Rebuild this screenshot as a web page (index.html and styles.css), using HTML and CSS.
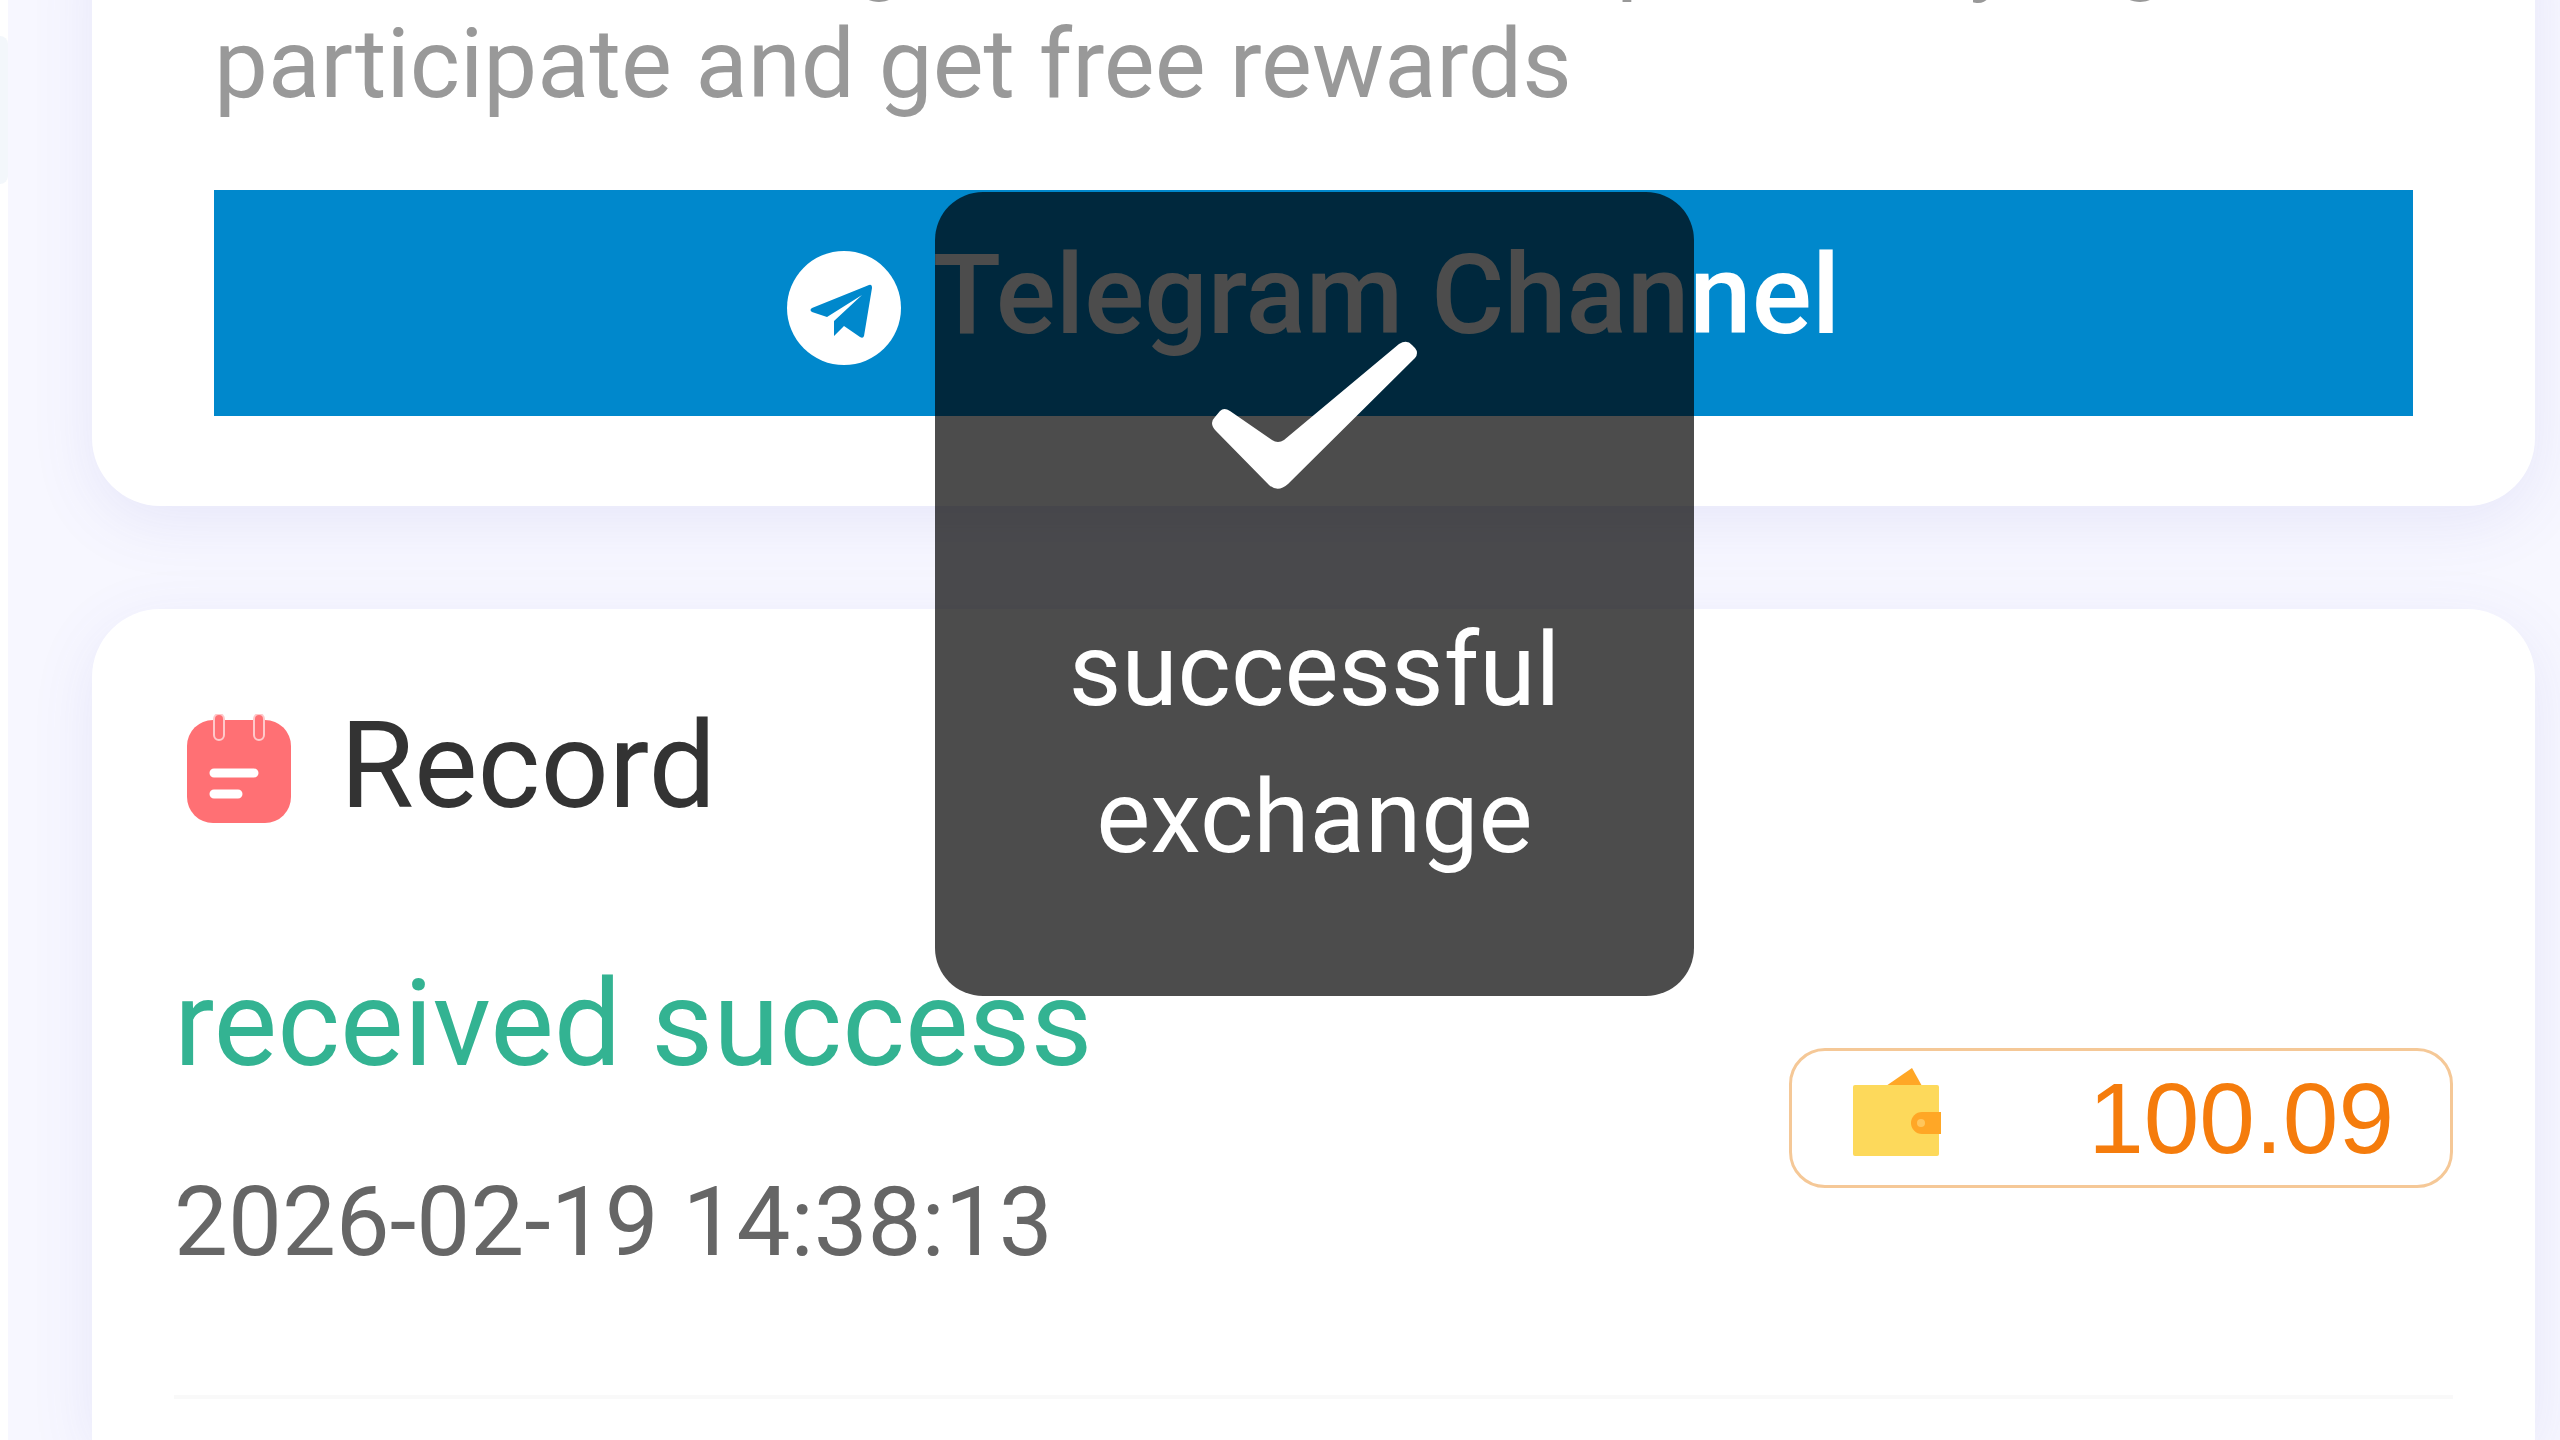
FILE: index.html
```html
<!DOCTYPE html>
<html lang="en">
<head>
    <meta charset="UTF-8">
    <meta name="viewport" content="width=device-width, initial-scale=1.0">
    <title>Record</title>
    <link rel="stylesheet" href="styles.css">
</head>
<body>
    <div class="side-tab"></div>
    <main class="page">
        <section class="card promo">
            <p class="promo-text">Follow the Telegram channels to pick daily a gift participate and get free rewards</p>
            <a class="telegram-btn" href="#">
                <svg class="telegram-icon" viewBox="0 0 114 114" aria-hidden="true">
                    <circle cx="57" cy="57" r="57" fill="#fff"/>
                    <path d="M25 57 82 34Q85 33 85 37L77 85Q76 88 73 86L57 75 47 85V70L75 44 40 66 25 61Q22 59 25 57Z" fill="#0088cc"/>
                </svg>
                <span>Telegram Channel</span>
            </a>
        </section>

        <section class="card record">
            <header class="record-head">
                <svg class="record-icon" viewBox="0 0 106 110" aria-hidden="true">
                    <rect x="1" y="6" width="104" height="103" rx="26" fill="#ff7074"/>
                    <rect x="28" y="0" width="10" height="26" rx="5" fill="#ff7074" stroke="#ffc9ca" stroke-width="2"/>
                    <rect x="68" y="0" width="10" height="26" rx="5" fill="#ff7074" stroke="#ffc9ca" stroke-width="2"/>
                    <path d="M28 59H68M28 80H52" fill="none" stroke="#fff" stroke-width="9" stroke-linecap="round"/>
                </svg>
                <h2>Record</h2>
            </header>
            <div class="entry">
                <div class="entry-info">
                    <p class="status">received success</p>
                    <time class="date" datetime="2026-02-19T14:38:13">2026-02-19 14:38:13</time>
                </div>
                <div class="amount">
                    <svg class="wallet-icon" viewBox="0 0 90 90" aria-hidden="true">
                        <path d="M34 19 60 1 70 19Z" fill="#ffa726"/>
                        <rect x="1" y="18" width="86" height="71" rx="2" fill="#fdd95b"/>
                        <path d="M89 45H70a11 11 0 0 0 0 22H89Z" fill="#ffa726"/>
                        <circle cx="69" cy="56" r="4" fill="#ffc65c"/>
                    </svg>
                    <span>100.09</span>
                </div>
            </div>
        </section>
    </main>

    <div class="toast" role="status">
        <svg class="toast-icon" viewBox="0 0 206 148" aria-hidden="true">
            <path d="M0 82Q0 79 3 76L8 70Q12 66 18 70L60 99Q66 103 72 99L187 3Q195-2 200 4L203 7Q207 12 203 17L76 143Q66 152 57 144L4 90Q0 86 0 82Z" fill="#fff"/>
        </svg>
        <p>successful exchange</p>
    </div>
</body>
</html>
```
FILE: styles.css
```css
* {
    box-sizing: border-box;
}
body {
    margin: 0;
    height: 100vh;
    overflow: hidden;
    font-family: Roboto, Arial, sans-serif;
    background-color: #fff;
}
p, h2 {
    margin: 0;
    font-weight: 400;
}
/* edge of the panel that sits off to the left */
.side-tab {
    position: absolute;
    top: 36px;
    left: 0;
    width: 8px;
    height: 148px;
    border-radius: 0 8px 8px 0;
    background-color: #f3f7fb;
}
.page {
    display: flex;
    flex-direction: column;
    gap: 103px;
    height: 100vh;
    margin-left: 8px;
    padding: 0 25px 0 84px;
    background-color: #f7f7ff;
    overflow: hidden;
}
.card {
    background-color: #fff;
    border-radius: 68px;
    box-shadow: 0 16px 64px rgba(92, 84, 200, 0.1);
}
.promo {
    margin-top: -108px;
    padding: 0 122px 90px;
}
.promo-text {
    padding-bottom: 68px;
    font-size: 96px;
    line-height: 115px;
    color: #999;
}
.telegram-btn {
    display: flex;
    justify-content: center;
    align-items: flex-end;
    gap: 32px;
    height: 226px;
    padding-bottom: 51px;
    font-size: 112px;
    line-height: 140px;
    font-weight: 500;
    color: #fff;
    text-decoration: none;
    background-color: #0088cc;
}
.telegram-icon {
    width: 114px;
    height: 114px;
}
.record {
    flex: 1 0 auto;
    padding: 105px 82px 0;
    border-bottom-left-radius: 0;
    border-bottom-right-radius: 0;
}
.record-head {
    display: flex;
    align-items: flex-start;
    gap: 48px;
    padding-left: 12px;
}
.record-icon {
    width: 106px;
    height: 110px;
}
.record h2 {
    font-size: 120px;
    line-height: 104px;
    color: #333;
}
.entry {
    display: flex;
    justify-content: space-between;
    align-items: center;
    padding: 130px 0 113px;
    border-bottom: 4px solid #f9f9f9;
}
.status {
    font-size: 120px;
    line-height: 140px;
    color: #33b392;
}
.date {
    display: block;
    margin-top: 68px;
    font-size: 96px;
    line-height: 120px;
    color: #666;
}
.amount {
    display: flex;
    justify-content: space-between;
    align-items: flex-start;
    width: 664px;
    height: 140px;
    padding: 16px 56px 0 60px;
    border: 3px solid #f5c897;
    border-radius: 36px;
    font-family: "Liberation Sans", Arial, sans-serif;
    font-size: 100px;
    line-height: 102px;
    color: #f57c0c;
}
.wallet-icon {
    width: 90px;
    height: 90px;
}
.toast {
    position: absolute;
    top: 192px;
    left: 935px;
    width: 759px;
    height: 804px;
    padding: 149px 96px 0;
    border-radius: 48px;
    text-align: center;
    font-size: 102px;
    line-height: 147px;
    color: #fff;
    background-color: rgba(0, 0, 0, 0.7);
}
.toast-icon {
    display: block;
    width: 206px;
    height: 148px;
    margin: 0 auto 108px;
}
```
